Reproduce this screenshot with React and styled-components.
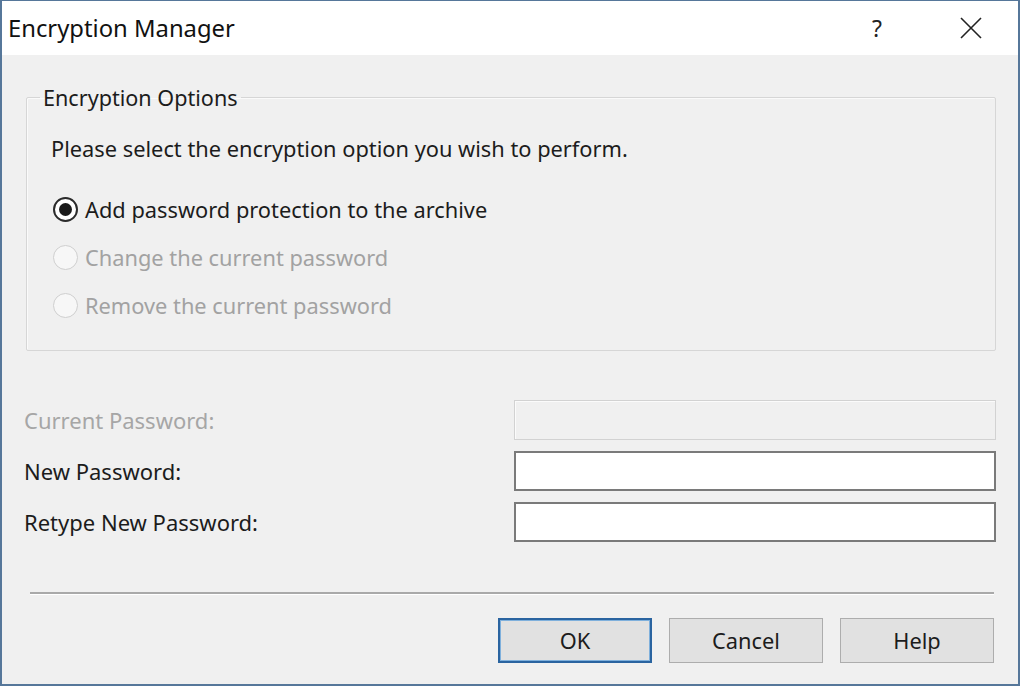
import React from 'react';
import styled, { createGlobalStyle } from 'styled-components';

const Global = createGlobalStyle`
  html, body {
    margin: 0;
    padding: 0;
    background: #f0f0f0;
  }
  * { box-sizing: border-box; }
`;

const Window = styled.div`
  width: 1020px;
  height: 686px;
  display: flex;
  flex-direction: column;
  border: 2px solid #56779a;
  border-top-width: 1px;
  font-family: 'Noto Sans', 'Open Sans', sans-serif;
  color: #1c1c1c;
  background: #f0f0f0;
  overflow: hidden;
`;

const TitleBar = styled.div`
  height: 54px;
  flex: none;
  display: flex;
  align-items: center;
  background: #fff;
  padding-left: 6px;
`;

const Title = styled.div`
  flex: 1;
  font-size: 23.8px;
  color: #111;
`;

const TitleButton = styled.div`
  width: 94px;
  height: 54px;
  display: flex;
  align-items: center;
  justify-content: center;
  font-size: 23px;
  color: #222;
`;

const Body = styled.div`
  flex: 1;
  display: flex;
  flex-direction: column;
  padding: 28px 22px 0 22px;
`;

const Group = styled.fieldset`
  margin: 0 0 0 2px;
  padding: 22px 24px 20px 24px;
  border: 1px solid #d6d6d6;
  box-shadow: inset 1px 1px 0 #fafafa;
  border-radius: 2px;
  display: flex;
  flex-direction: column;
  height: 268px;
`;

const Legend = styled.legend`
  font-size: 21.6px;
  padding: 0 3px;
  margin-left: -11px;
  color: #1c1c1c;
`;

const Prompt = styled.div`
  font-size: 21.8px;
  margin-bottom: 22px;
`;

const RadioRow = styled.label`
  display: flex;
  align-items: center;
  height: 48px;
  padding-left: 2px;
  font-size: 21.8px;
  color: ${(p) => (p.disabled ? '#a2a2a2' : '#1c1c1c')};
`;

const RadioCircle = styled.span`
  width: 25px;
  height: 25px;
  flex: none;
  border-radius: 50%;
  margin-right: 7px;
  display: flex;
  align-items: center;
  justify-content: center;
  border: ${(p) => (p.checked ? '2px solid #2b2b2b' : '1.5px solid #cfcfcf')};
  background: ${(p) => (p.checked ? '#fff' : '#f7f7f7')};

  &::after {
    content: '';
    display: ${(p) => (p.checked ? 'block' : 'none')};
    width: 13px;
    height: 13px;
    border-radius: 50%;
    background: #1a1a1a;
  }
`;

const Fields = styled.div`
  display: grid;
  grid-template-columns: 490px 1fr;
  row-gap: 11px;
  align-items: center;
  margin-top: 49px;
`;

const FieldLabel = styled.div`
  font-size: 22px;
  color: ${(p) => (p.disabled ? '#a6a6a6' : '#1c1c1c')};
`;

const TextBox = styled.div`
  height: 40px;
  border: ${(p) => (p.disabled ? '1px solid #d2d2d2' : '2px solid #7a7a7a')};
  background: ${(p) => (p.disabled ? '#f0f0f0' : '#fff')};
  box-shadow: ${(p) => (p.disabled ? 'inset 1px 1px 0 #fbfbfb' : 'none')};
`;

const Separator = styled.div`
  margin: 50px 2px 0 6px;
  height: 3px;
  border-top: 2px solid #a9a9a9;
  border-bottom: 1px solid #ffffff;
`;

const ButtonRow = styled.div`
  display: flex;
  justify-content: flex-end;
  gap: 17px;
  margin-top: 23px;
  padding-right: 2px;
`;

const Button = styled.div`
  width: 154px;
  height: 45px;
  display: flex;
  align-items: center;
  justify-content: center;
  font-size: 21.8px;
  color: #1c1c1c;
  background: #e1e1e1;
  border: ${(p) => (p.primary ? '2px solid #2a64a0' : '1.5px solid #adadad')};
  box-shadow: ${(p) => (p.primary ? 'inset 0 0 0 1px #7fb0dc' : 'none')};
`;

const options = [
  { label: 'Add password protection to the archive', checked: true },
  { label: 'Change the current password', disabled: true },
  { label: 'Remove the current password', disabled: true },
];

const fields = [
  { label: 'Current Password:', disabled: true },
  { label: 'New Password:' },
  { label: 'Retype New Password:' },
];

export default function App() {
  return (
    <>
      <Global />
      <Window>
        <TitleBar>
          <Title>Encryption Manager</Title>
          <TitleButton>?</TitleButton>
          <TitleButton>
            <svg width="22" height="22" viewBox="0 0 22 22">
              <path d="M1 1 L21 21 M21 1 L1 21" stroke="#222" strokeWidth="1.6" fill="none" />
            </svg>
          </TitleButton>
        </TitleBar>
        <Body>
          <Group>
            <Legend>Encryption Options</Legend>
            <Prompt>Please select the encryption option you wish to perform.</Prompt>
            {options.map((o) => (
              <RadioRow key={o.label} disabled={o.disabled}>
                <RadioCircle checked={o.checked} />
                {o.label}
              </RadioRow>
            ))}
          </Group>
          <Fields>
            {fields.map((f) => (
              <React.Fragment key={f.label}>
                <FieldLabel disabled={f.disabled}>{f.label}</FieldLabel>
                <TextBox disabled={f.disabled} />
              </React.Fragment>
            ))}
          </Fields>
          <Separator />
          <ButtonRow>
            <Button primary>OK</Button>
            <Button>Cancel</Button>
            <Button>Help</Button>
          </ButtonRow>
        </Body>
      </Window>
    </>
  );
}
